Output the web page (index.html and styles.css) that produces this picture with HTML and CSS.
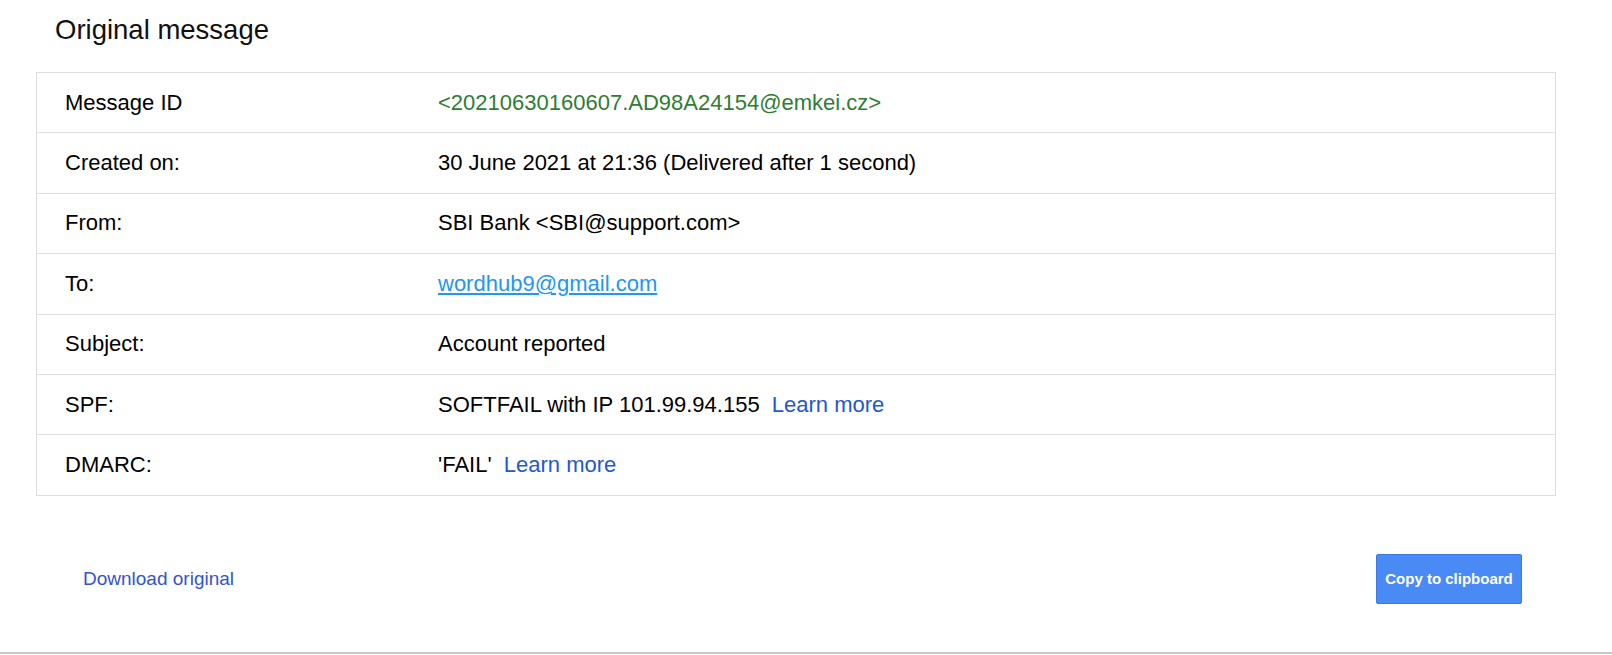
FILE: index.html
```html
<!DOCTYPE html>
<html>
<head>
<meta charset="utf-8">
<title>Original message</title>
<link rel="stylesheet" href="styles.css">
</head>
<body>
<div class="page">
  <h1 class="title">Original message</h1>
  <div class="details">
    <div class="row">
      <div class="label">Message ID</div>
      <div class="value msgid">&lt;20210630160607.AD98A24154@emkei.cz&gt;</div>
    </div>
    <div class="row">
      <div class="label">Created on:</div>
      <div class="value">30 June 2021 at 21:36 (Delivered after 1 second)</div>
    </div>
    <div class="row">
      <div class="label">From:</div>
      <div class="value">SBI Bank &lt;SBI@support.com&gt;</div>
    </div>
    <div class="row">
      <div class="label">To:</div>
      <div class="value"><a class="mail" href="#">wordhub9@gmail.com</a></div>
    </div>
    <div class="row">
      <div class="label">Subject:</div>
      <div class="value">Account reported</div>
    </div>
    <div class="row">
      <div class="label">SPF:</div>
      <div class="value">SOFTFAIL with IP 101.99.94.155 <a class="learn" href="#">Learn more</a></div>
    </div>
    <div class="row">
      <div class="label">DMARC:</div>
      <div class="value">'FAIL' <a class="learn" href="#">Learn more</a></div>
    </div>
  </div>
  <div class="footer">
    <a class="download" href="#">Download original</a>
    <button class="copy" type="button">Copy to clipboard</button>
  </div>
</div>
</body>
</html>
```

FILE: styles.css
```css
html, body {
  margin: 0;
  padding: 0;
  background: #ffffff;
}

body {
  font-family: "Liberation Sans", Arial, sans-serif;
  color: #000000;
  width: 1612px;
  height: 655px;
  overflow: hidden;
}

.page {
  height: 652px;
  border-bottom: 2px solid #c8c8c8;
  display: flex;
  flex-direction: column;
}

.title {
  margin: 0;
  padding: 13px 0 0 55px;
  height: 72px;
  box-sizing: border-box;
  font-size: 27.5px;
  font-weight: normal;
  line-height: 33px;
  color: #111111;
}

.details {
  margin: 0 56px 0 36px;
  border: 1px solid #dedede;
  border-top: none;
}

.row {
  display: flex;
  align-items: center;
  height: 60.4px;
  box-sizing: border-box;
  border-top: 1px solid #dedede;
  font-size: 22px;
}

.label {
  width: 401px;
  padding-left: 28px;
  box-sizing: border-box;
  flex: none;
}

.value {
  flex: 1;
  white-space: pre;
}

.msgid {
  color: #2e7d32;
}

.mail {
  color: #2196f3;
  text-decoration: underline;
}

.learn {
  color: #2257cf;
  text-decoration: none;
  margin-left: 6px;
}

.footer {
  display: flex;
  justify-content: space-between;
  align-items: center;
  margin-top: 58px;
  padding: 0 90px 0 83px;
}

.download {
  color: #3452d4;
  font-size: 19px;
  text-decoration: none;
}

.copy {
  width: 146px;
  height: 50px;
  background: #4a8af4;
  border: 1px solid #3b78e7;
  border-radius: 2px;
  color: #ffffff;
  font-family: "Liberation Sans", Arial, sans-serif;
  font-weight: bold;
  font-size: 15px;
  padding: 0;
  cursor: pointer;
}
```
